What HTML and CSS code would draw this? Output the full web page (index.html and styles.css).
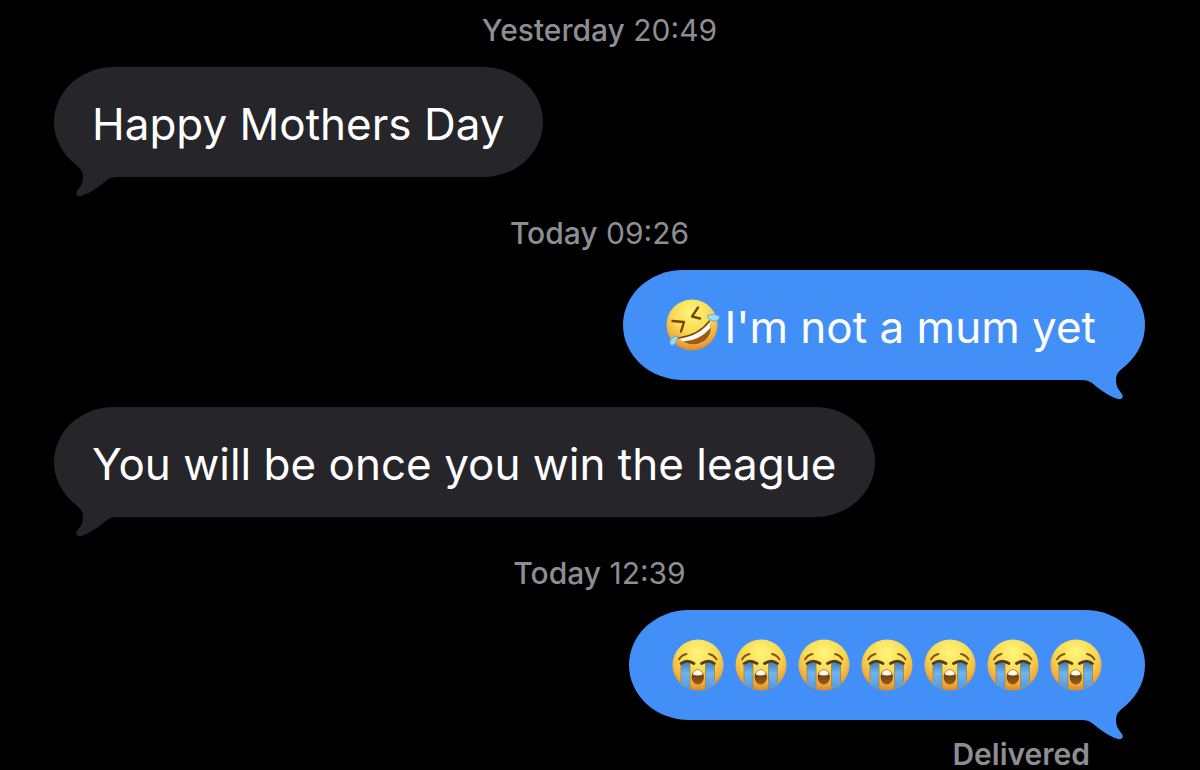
FILE: index.html
```html
<!DOCTYPE html>
<html lang="en">
<head>
  <meta charset="UTF-8">
  <meta name="viewport" content="width=device-width, initial-scale=1">
  <title>Messages</title>
  <link rel="stylesheet" href="styles.css">
</head>
<body>

  <!-- Shared shapes -->
  <svg class="defs" aria-hidden="true">
    <defs>
      <radialGradient id="face" cx="50%" cy="26%" r="76%">
        <stop offset="0" stop-color="#fff67c"/>
        <stop offset="0.5" stop-color="#fad951"/>
        <stop offset="0.8" stop-color="#f0ac3c"/>
        <stop offset="1" stop-color="#d98324"/>
      </radialGradient>
      <linearGradient id="stream" x1="0" y1="0" x2="0" y2="1">
        <stop offset="0" stop-color="#3d82cb"/>
        <stop offset="0.4" stop-color="#70b5ef"/>
        <stop offset="1" stop-color="#4c9ae6"/>
      </linearGradient>
      <linearGradient id="mouth" x1="0" y1="0" x2="0" y2="1">
        <stop offset="0" stop-color="#54300d"/>
        <stop offset="1" stop-color="#9b5d18"/>
      </linearGradient>
    </defs>

    <symbol id="tail" viewBox="0 0 50 42">
      <path d="M0 0 L4 7 C9 12 14 14 14 22 C14 29 11 32 8 36 C6 39 8 42 12 41 C22 38 32 30 38 25 Q42 22 48 22 V0 Z"/>
    </symbol>

    <symbol id="crying" viewBox="0 0 52 52">
      <circle cx="26" cy="26" r="25.5" fill="url(#face)"/>
      <path d="M9 24 H18 V50 Q13 48 9 44 Z" fill="url(#stream)"/>
      <path d="M42.500 24 H33.500 V50 Q39 48 42.500 44 Z" fill="url(#stream)"/>
      <path d="M9 24 V44 M18 24 V50 M33.500 24 V50 M42.500 24 V44" fill="none" stroke="#a98a4b" stroke-width="1"/>
      <path d="M9 24.500 Q15 20 22 24.500 M42.500 24.500 Q36.500 20 29.500 24.500" fill="none" stroke="#593b12" stroke-width="2.800" stroke-linecap="round"/>
      <path d="M7 20.500 Q9.500 16 14.500 15 M44.500 20.500 Q42 16 37 15" fill="none" stroke="#805616" stroke-width="1.900" stroke-linecap="round"/>
      <ellipse cx="25.750" cy="38" rx="6.200" ry="7.500" fill="url(#mouth)"/>
      <path d="M20.800 35.500 Q21.500 31 25.750 31 Q30 31 30.700 35.500 Q25.750 37.500 20.800 35.500 Z" fill="#fff8ef"/>
    </symbol>

    <symbol id="rofl" viewBox="0 0 54 52">
      <circle cx="26" cy="26" r="25.500" fill="url(#face)"/>
      <path d="M6.500 22 L18 23 L15 32.500 M32 8.500 L26 17.500 L34 19.500" fill="none" stroke="#75450a" stroke-width="2.400" stroke-linecap="round" stroke-linejoin="round"/>
      <path d="M13 39 Q33 36 43.500 22 Q48 34 38 42 Q25 50 13 39 Z" fill="#9a5b18"/>
      <path d="M13 39 Q33 36 43.500 22 Q45 25 44.500 29 Q33 42 17 42.500 Q14.500 41 13 39 Z" fill="#fffaf2"/>
      <path d="M13 39 Q33 36 43.500 22" fill="none" stroke="#74420d" stroke-width="1.400" stroke-linecap="round"/>
      <path d="M41 17 Q44 15 48 15.500 Q53 16 53.500 18 Q53 22 48 22 Q43 21.500 41 17 Z" fill="#9eddfa" stroke="#4aa4dc" stroke-width="0.800"/>
      <path d="M12 37 Q11 43 8 45.500 Q5.500 47.500 4 45 Q3 41 7 38.500 Q9 37 12 37 Z" fill="#9eddfa" stroke="#4aa4dc" stroke-width="0.800"/>
    </symbol>
  </svg>

  <main class="chat">
    <p class="stamp"><strong>Yesterday</strong> 20:49</p>
    <div class="bubble received">
      <span>Happy Mothers Day</span>
      <svg class="tail" aria-hidden="true"><use href="#tail"/></svg>
    </div>

    <p class="stamp"><strong>Today</strong> 09:26</p>
    <div class="bubble sent">
      <svg class="rofl" role="img" aria-label="🤣"><use href="#rofl"/></svg>
      <span>I'm not a mum yet</span>
      <svg class="tail" aria-hidden="true"><use href="#tail"/></svg>
    </div>
    <div class="bubble received">
      <span>You will be once you win the league</span>
      <svg class="tail" aria-hidden="true"><use href="#tail"/></svg>
    </div>

    <p class="stamp"><strong>Today</strong> 12:39</p>
    <div class="bubble sent emojis">
      <svg class="cry" role="img" aria-label="😭"><use href="#crying"/></svg>
      <svg class="cry" role="img" aria-label="😭"><use href="#crying"/></svg>
      <svg class="cry" role="img" aria-label="😭"><use href="#crying"/></svg>
      <svg class="cry" role="img" aria-label="😭"><use href="#crying"/></svg>
      <svg class="cry" role="img" aria-label="😭"><use href="#crying"/></svg>
      <svg class="cry" role="img" aria-label="😭"><use href="#crying"/></svg>
      <svg class="cry" role="img" aria-label="😭"><use href="#crying"/></svg>
      <svg class="tail" aria-hidden="true"><use href="#tail"/></svg>
    </div>
    <p class="status">Delivered</p>
  </main>

</body>
</html>
```
FILE: styles.css
```css
body {
  margin: 0;
  background: #000;
  color: #fff;
  font-family: Inter, "Liberation Sans", sans-serif;
}

.defs {
  position: absolute;
  width: 0;
  height: 0;
}

.chat {
  display: flex;
  flex-direction: column;
  padding: 12px 55px 0 54px;
}

.stamp,
.status {
  margin: 0;
  color: #8d8d93;
  font-size: 30px;
  line-height: 36px;
}

.stamp {
  text-align: center;
  margin-bottom: 19px;
}

.bubble + .stamp {
  margin-top: 38px;
}

.stamp strong {
  font-weight: 500;
}

.bubble {
  position: relative;
  display: flex;
  align-items: center;
  box-sizing: border-box;
  min-height: 110px;
  font-size: 44px;
  line-height: 56px;
  border-radius: 60px / 55px;
}

.bubble + .bubble {
  margin-top: 27px;
}

.bubble span {
  padding-top: 3px;
}

.received {
  align-self: flex-start;
  padding: 0 39px 0 38px;
  background: #26252a;
  fill: #26252a;
}

.sent {
  align-self: flex-end;
  padding: 0 49px 0 43px;
  background: #4290f7;
  fill: #4290f7;
}

.emojis {
  gap: 11px;
  padding: 0 43px;
}

.tail {
  position: absolute;
  left: 15px;
  bottom: -20px;
  width: 50px;
  height: 42px;
}

.sent .tail {
  left: auto;
  right: 15px;
  transform: scaleX(-1);
}

.cry {
  width: 52px;
  height: 52px;
}

.rofl {
  width: 54px;
  height: 52px;
  margin-right: 4px;
}

.status {
  align-self: flex-end;
  margin-top: 18px;
  padding-right: 55px;
  font-weight: 600;
  line-height: 32px;
}
```
